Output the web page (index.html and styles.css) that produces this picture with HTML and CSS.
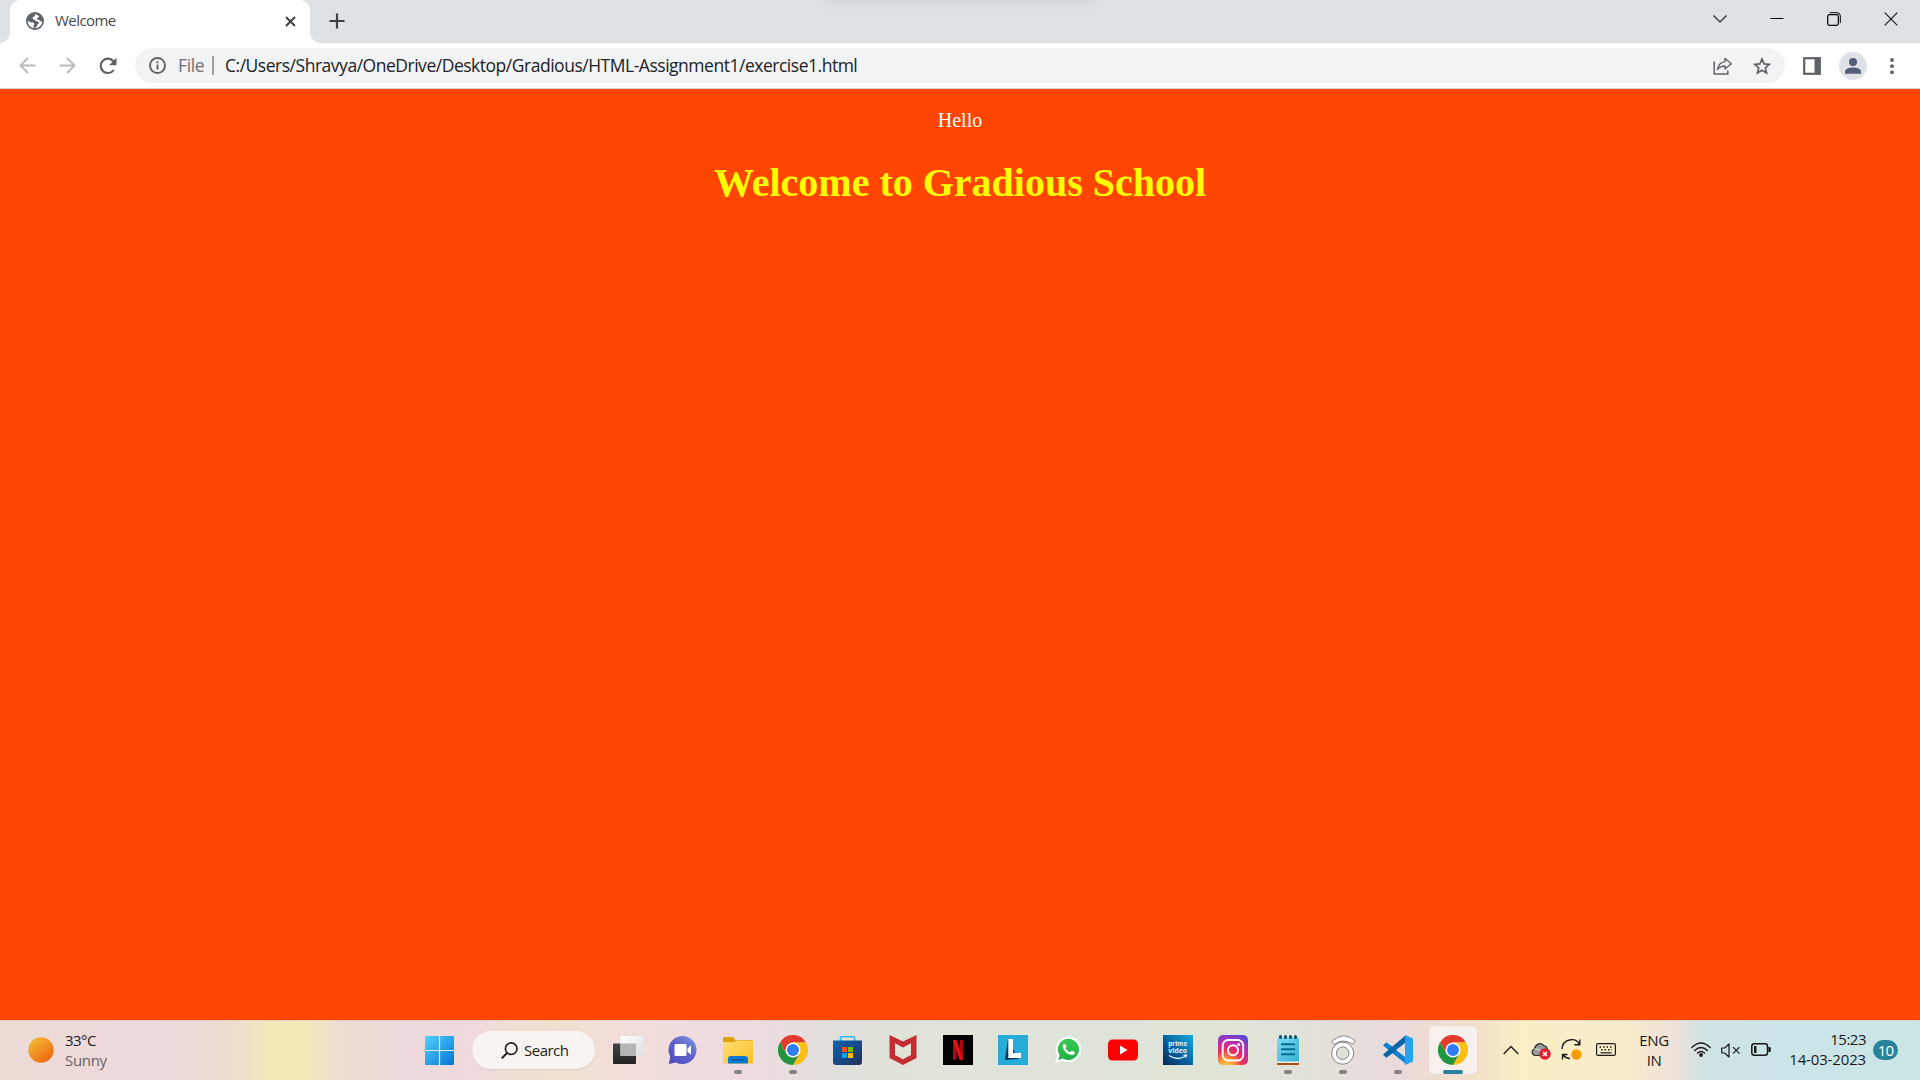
FILE: index.html
```html
<!DOCTYPE html>
<html lang="en">
<head>
<meta charset="utf-8">
<title>Welcome</title>
<link rel="stylesheet" href="styles.css">
</head>
<body>
<svg width="0" height="0" class="defs">
  <defs>
    <linearGradient id="win" x1="0" y1="0" x2="1" y2="1"><stop offset="0" stop-color="#50d3fb"/><stop offset="1" stop-color="#0673d6"/></linearGradient>
    <linearGradient id="sun" x1="0" y1="0" x2=".8" y2="1"><stop offset="0" stop-color="#f2c43a"/><stop offset="1" stop-color="#ef6410"/></linearGradient>
    <linearGradient id="dark" x1="0" y1="0" x2="0" y2="1"><stop offset="0" stop-color="#444"/><stop offset="1" stop-color="#222"/></linearGradient>
    <linearGradient id="lite" x1="0" y1="0" x2="1" y2="1"><stop offset="0" stop-color="#fff"/><stop offset="1" stop-color="#dedede"/></linearGradient>
    <linearGradient id="chat" x1="1" y1="0" x2="0.2" y2="1"><stop offset="0" stop-color="#7f9be8"/><stop offset=".5" stop-color="#6264c8"/><stop offset="1" stop-color="#4f4fc4"/></linearGradient>
    <linearGradient id="fold" x1="0" y1="0" x2="1" y2="1"><stop offset="0" stop-color="#ffdf78"/><stop offset="1" stop-color="#fbbf22"/></linearGradient>
    <linearGradient id="store" x1="0" y1="0" x2="1" y2="1"><stop offset="0" stop-color="#0a64b4"/><stop offset="1" stop-color="#263057"/></linearGradient>
    <linearGradient id="prime" x1="1" y1="0" x2="0" y2="1"><stop offset="0" stop-color="#16a8dd"/><stop offset=".6" stop-color="#075a97"/><stop offset="1" stop-color="#06264f"/></linearGradient>
    <radialGradient id="insta" cx=".28" cy="1.05" r="1.15"><stop offset="0" stop-color="#ffd055"/><stop offset=".22" stop-color="#fb9a35"/><stop offset=".48" stop-color="#ea2c5c"/><stop offset=".72" stop-color="#b82fae"/><stop offset="1" stop-color="#5a48d8"/></radialGradient>
    <linearGradient id="note" x1="0" y1="0" x2="1" y2="1"><stop offset="0" stop-color="#7fdcf0"/><stop offset="1" stop-color="#35b0d4"/></linearGradient>
    <linearGradient id="wa" x1="0" y1="0" x2="0" y2="1"><stop offset="0" stop-color="#35cb55"/><stop offset="1" stop-color="#1fb141"/></linearGradient>
    <symbol id="chrome" viewBox="0 0 30 30">
      <path d="M2 7.5A15 15 0 0 1 28 7.5H15L8.5 18.7z" fill="#e23c2e"/>
      <path d="M28 7.5A15 15 0 0 1 15 30L21.5 18.7 21.5 11.2 15 7.5z" fill="#fcc011"/>
      <path d="M2 7.5A15 15 0 0 0 15 30L21.5 18.7H8.5z" fill="#22963f"/>
      <circle cx="15" cy="15" r="7.5" fill="#fff"/><circle cx="15" cy="15" r="6" fill="#2f7df1"/>
    </symbol>
  </defs>
</svg>

<header class="tabstrip">
  <div class="tab">
    <svg class="globe" width="18" height="18" viewBox="0 0 18 18"><circle cx="9" cy="9" r="9" fill="#5f6368"/><path d="M9.800 1.900C8.600 2.500 9.300 3.700 8.300 4.400 7 4.700 6.400 5.600 6.600 6.700 7.500 8.300 9.600 7.300 10.200 8.900 10.700 9.900 12.500 9.200 13 10.300 13.200 11.600 11.800 11.900 11.300 13 10.900 14.300 9.700 15.200 9 16.200 12.900 16.200 16.200 13 16.200 9.200 15 9.800 13.600 9.200 13.200 8 12 8 10.800 7.800 11 6.600 11.400 5.600 13.300 5.600 13 4.200 12.600 3.200 11 3.200 9.800 1.900z" fill="#fff"/><path d="M1.800 8.700C1.600 12.500 4.400 15.500 7.600 16 8.300 14.900 7.300 14 7.700 12.900 8.600 12.200 8.400 10.800 7.200 10.400 5.500 10.400 3.900 10.200 1.800 8.700z" fill="#fff"/></svg>
    <span class="tab-title">Welcome</span>
    <svg class="tab-close" width="11" height="11" viewBox="0 0 11 11"><path d="M1 1l9 9M10 1l-9 9" stroke="#3c4043" stroke-width="2"/></svg>
  </div>
  <svg class="new-tab" width="16" height="16" viewBox="0 0 16 16"><path d="M8 .5v15M.5 8h15" stroke="#3c4043" stroke-width="2.200"/></svg>
  <div class="snap-shadow"></div>
  <div class="window-controls">
    <svg width="14" height="14" viewBox="0 0 14 14"><path d="M.5 3.500L7 10l6.500-6.500" fill="none" stroke="#222" stroke-width="1.100"/></svg>
    <svg width="14" height="14" viewBox="0 0 14 14"><path d="M.5 6.500h13" stroke="#000"/></svg>
    <svg width="14" height="14" viewBox="0 0 14 14"><rect x=".7" y="2.700" width="10.600" height="10.600" rx="1.800" fill="none" stroke="#000" stroke-width="1.200"/><path d="M2.800.7H10q3.300 0 3.300 3.300v7" fill="none" stroke="#000"/></svg>
    <svg width="14" height="14" viewBox="0 0 14 14"><path d="M.7.7l12.600 12.600M13.300.7L.7 13.300" stroke="#111" stroke-width="1.100"/></svg>
  </div>
</header>

<nav class="toolbar">
  <svg class="nav-icon" width="18" height="18" viewBox="0 0 18 18"><path d="M16.500 8.500H1.500M9 1L1.500 8.500 9 16" fill="none" stroke="#bababa" stroke-width="1.800"/></svg>
  <svg class="nav-icon" width="18" height="18" viewBox="0 0 18 18"><path d="M.5 8.500h15M8 1l7.500 7.500L8 16" fill="none" stroke="#bababa" stroke-width="1.800"/></svg>
  <svg class="nav-icon" width="18" height="18" viewBox="0 0 18 18"><path d="M14.800 13A7.200 7.200 0 1 1 14.500 4.300" fill="none" stroke="#5f6368" stroke-width="2.100"/><path d="M17.500.8v7.400h-7.400z" fill="#5f6368"/></svg>
  <div class="omnibox">
    <svg width="17" height="17" viewBox="0 0 17 17"><circle cx="8.500" cy="8.500" r="7.500" fill="none" stroke="#5f6368" stroke-width="1.900"/><path d="M8.500 7.500v5M8.500 4.300v1.900" stroke="#5f6368" stroke-width="1.900"/></svg>
    <span class="scheme">File</span>
    <span class="divider"></span>
    <span class="url">C:/Users/Shravya/OneDrive/Desktop/Gradious/HTML-Assignment1/exercise1.html</span>
    <svg class="share" width="20" height="18" viewBox="0 0 20 18"><path d="M1.200 4.500v12.600h13.600v-3.600" fill="none" stroke="#5f6368" stroke-width="1.500"/><path d="M12 1.500l6.300 5.300-6.300 5.200V9C8.500 9 6.500 10 4.500 12.500 5.200 8 7.500 5.200 12 4.600z" fill="none" stroke="#5f6368" stroke-width="1.400" stroke-linejoin="round"/></svg>
    <svg class="star" width="18" height="18" viewBox="0 0 18 18"><path d="M9 2l2.100 4.900 5.200.45-4 3.450 1.250 5.200L9 13.200 4.450 16l1.250-5.200-4-3.450 5.200-.45z" fill="none" stroke="#5f6368" stroke-width="1.700"/></svg>
  </div>
  <svg class="panel" width="18" height="18" viewBox="0 0 18 18"><rect x="1.200" y="1.200" width="15.600" height="15.600" fill="#fff" stroke="#5f6368" stroke-width="2.200"/><path d="M11.500 1H17v16h-5.500z" fill="#5f6368"/></svg>
  <svg class="avatar" width="28" height="28" viewBox="0 0 28 28"><circle cx="14" cy="14" r="14" fill="#dee1e6"/><circle cx="14" cy="10" r="4" fill="#525f76"/><path d="M6 21.800v-2c0-3.200 4.500-4.300 8-4.300s8 1.100 8 4.300v2z" fill="#525f76"/></svg>
  <svg class="menu" width="6" height="18" viewBox="0 0 6 18"><circle cx="3" cy="3" r="1.900" fill="#5f6368"/><circle cx="3" cy="9.200" r="1.900" fill="#5f6368"/><circle cx="3" cy="15.300" r="1.900" fill="#5f6368"/></svg>
</nav>

<main class="page">
  <p>Hello</p>
  <h1>Welcome to Gradious School</h1>
</main>

<footer class="taskbar">
  <div class="weather">
    <svg width="26" height="26" viewBox="0 0 26 26"><circle cx="13" cy="13" r="12.700" fill="url(#sun)"/></svg>
    <div class="lines"><span class="temp">33°C</span><span class="cond">Sunny</span></div>
  </div>
  <svg class="start" width="29" height="29" viewBox="0 0 29 29"><rect width="29" height="29" rx="1" fill="url(#win)"/><path d="M14.500 0v29M0 14.500h29" stroke="#e3edf4" stroke-width="1.200"/></svg>
  <div class="search">
    <svg width="17" height="17" viewBox="0 0 17 17"><circle cx="10.200" cy="6.700" r="5.800" fill="none" stroke="#1b1b1b" stroke-width="1.600"/><path d="M6 11L.8 16.300" stroke="#1b1b1b" stroke-width="1.900"/></svg>
    <span>Search</span>
  </div>
  <div class="apps">
    <div class="app"><svg viewBox="0 0 30 30"><rect y="8.500" width="23" height="20.500" rx="1" fill="url(#dark)"/><rect x="7.500" y="1" width="22.500" height="20" rx="1" fill="url(#lite)"/><path d="M7.500 8.500H23V21H7.500z" fill="#b5b5b5"/></svg></div>
    <div class="app"><svg viewBox="0 0 30 30"><path d="M14.500 1a14 14 0 1 1-6.500 26.400L.9 29l1.300-7.300A14 14 0 0 1 14.500 1z" fill="url(#chat)"/><rect x="6.500" y="9" width="12" height="12" rx="1.500" fill="#fff"/><path d="M19.500 13.500l3.500-3.200v9.500L19.500 16.800z" fill="#fff"/></svg></div>
    <div class="app run"><svg viewBox="0 0 30 30"><path d="M0 3q0-1 1-1h9l2.500 3H29q1 0 1 1v10H0z" fill="#dda009"/><path d="M0 7h11l2-1.500H30V27.500q0 1-1 1H1q-1 0-1-1z" fill="url(#fold)"/><path d="M5 28.500V24q0-3 3-3h14q3 0 3 3v4.500z" fill="#0d78d0"/><path d="M8.500 24.800h13" stroke="#064f96"/></svg></div>
    <div class="app run"><svg><use href="#chrome"/></svg></div>
    <div class="app"><svg viewBox="0 0 30 30"><path d="M7.500 7V3q0-1.200 1.200-1.200h11.600q1.200 0 1.200 1.200v4" fill="none" stroke="#28bdef" stroke-width="1.600"/><path d="M0 5.500h29V27q0 3-3 3H3q-3 0-3-3z" fill="url(#store)"/><path d="M9 12h5v5H9z" fill="#f25022"/><path d="M15 12h5v5h-5z" fill="#7fba00"/><path d="M9 18h5v5H9z" fill="#00a4ef"/><path d="M15 18h5v5h-5z" fill="#ffb900"/></svg></div>
    <div class="app"><svg viewBox="0 0 30 30"><path d="M1.500 0L15 6.500 28.500 0V23L15 30 1.500 23zM7 8.300V20l8 4.300L23 20V8.300L15 12.500z" fill="#c12d31" fill-rule="evenodd"/></svg></div>
    <div class="app"><svg viewBox="0 0 30 30"><path d="M0 0h30v30H0z"/><path d="M10 5h3.500v19.500L10 25zM17 5h3v20l-3-.5z" fill="#b00810"/><path d="M10 5h3.500L20 25l-3.500-.5z" fill="#e91019"/></svg></div>
    <div class="app"><svg viewBox="0 0 30 30"><path d="M0 0h30v30H0z" fill="#27abd8"/><path d="M10 4L7 25l14-1-4-6z" fill="#0c3568"/><path d="M10.300 4h4.700v14h8v5H10.300z" fill="#fff"/></svg></div>
    <div class="app"><svg viewBox="0 0 30 30"><path d="M15.500 1.500a12.800 12.800 0 1 1-6.300 24L2 28l2.500-7A12.900 12.900 0 0 1 15.500 1.500z" fill="#fff"/><path d="M15.500 3.800a10.600 10.600 0 1 1-5.700 19.600L5.200 25l1.500-4.600A10.600 10.600 0 0 1 15.500 3.800z" fill="url(#wa)"/><path d="M11.700 8.700c-1.500.2-2.300 1.400-1.900 3.200.8 3.900 5.200 8 9.300 8 1.700 0 3-1.200 2.800-2.700l-3-1.600-1.700 1.700c-2-.8-3.800-2.500-4.600-4.400l1.200-1.500z" fill="#fff"/></svg></div>
    <div class="app"><svg viewBox="0 0 30 30"><rect y="4.500" width="30" height="21" rx="4.500" fill="#f00"/><path d="M12 10.500l7.500 4.500-7.500 4.500z" fill="#fff"/></svg></div>
    <div class="app"><svg viewBox="0 0 30 30"><path d="M0 0h30v30H0z" fill="url(#prime)"/><text class="prime" x="14.700" y="10.500" textLength="19" lengthAdjust="spacingAndGlyphs">prime</text><text class="prime" x="14.700" y="18" textLength="19" lengthAdjust="spacingAndGlyphs">video</text><path d="M6 20.500q8 5.500 16 1M20.500 20.300l3-.3-.8 2.600" fill="none" stroke="#e0f4fb" stroke-width="1.300"/></svg></div>
    <div class="app"><svg viewBox="0 0 30 30"><rect width="30" height="30" rx="5" fill="url(#insta)"/><rect x="4.700" y="5" width="20.500" height="20.500" rx="5.500" fill="none" stroke="#fff" stroke-width="1.900"/><circle cx="15" cy="15.200" r="5" fill="none" stroke="#fff" stroke-width="1.900"/><circle cx="20.700" cy="9.500" r="1.500" fill="#fff"/></svg></div>
    <div class="app run"><svg viewBox="0 0 30 30"><path d="M4 28h22v1.200q0 .8-.8.800H4.800q-.8 0-.8-.8z" fill="#a5510b"/><path d="M4 26h22v2H4z" fill="#eee"/><path d="M4 4q0-1.500 1.500-1.500h19Q26 2.500 26 4v22.500H4z" fill="url(#note)"/><path d="M8 9.300h14M8 14.300h14M8 19.200h14" stroke="#086b91" stroke-width="1.900"/><path d="M7.500 1.500v1M12.500 1.500v1M17.500 1.500v1M22.500 1.500v1" stroke="#095775" stroke-width="3" stroke-linecap="round"/></svg></div>
    <div class="app run"><svg viewBox="0 0 30 30"><g fill="#fff" stroke="#777" stroke-width=".9"><path d="M5.500 5.200Q15-3.500 26.500 5l.2 1.800-2 2.200Q15 2.800 6.300 9.300L3.600 6.800z"/><circle cx="14.700" cy="18.200" r="11"/><circle cx="14.700" cy="18.200" r="6.300" fill="#dfe1d8"/></g></svg></div>
    <div class="app run"><svg viewBox="0 0 30 30"><path d="M0 10.500l2.700-2.700q.6-.6 1.400 0L23 21.500V29z" fill="#0a82cf"/><path d="M0 19.500l2.700 2.700q.6.600 1.400 0L23 8.500V0z" fill="#0b65a8"/><path d="M22 0l8 3.500v23L22 30z" fill="#24a3ef"/><path d="M22 8v14l-9-7z" fill="#e5dadb"/></svg></div>
    <div class="app run active"><svg><use href="#chrome"/></svg></div>
  </div>
  <div class="tray">
    <svg class="chevron" width="16" height="10" viewBox="0 0 16 10"><path d="M.7 9L8 1.500 15.300 9" fill="none" stroke="#1b1b1b" stroke-width="1.300"/></svg>
    <svg class="cloud" width="20" height="18" viewBox="0 0 20 18"><path d="M4.500 13.500C1 13.500-.5 9 3.500 6.800 4.500 2 10.500-.5 13 3.800c3 .3 3.500 2.500 3.500 4.500L13 13.500z" fill="#999b9e" stroke="#292929" stroke-width="1.200"/><path d="M3.500 7q3.500-1 6.500 2.500l6-2" fill="none" stroke="#d5d1c5" stroke-width="1.200"/><circle cx="14" cy="12" r="5.800" fill="#e0202e"/><path d="M12 10l4 4m0-4l-4 4" stroke="#fff" stroke-width="1.500"/></svg>
    <svg class="sync" width="21" height="21" viewBox="0 0 21 21"><path d="M1 10C1.500 0 14.500-2.500 18.500 5.500M18.800.5v5.300h-5.500M6.500 15.500H1.500V20.500M2 16q3 3.500 7 3.500" fill="none" stroke="#1b1b1b" stroke-width="1.400"/><circle cx="15.500" cy="15.500" r="5.200" fill="#fb9b08"/></svg>
    <svg class="keyboard" width="20" height="13" viewBox="0 0 20 13"><rect x=".6" y=".6" width="18.800" height="11.800" rx="1.500" fill="none" stroke="#1b1b1b" stroke-width="1.200"/><path d="M3.500 4h13M5 6.800h11" stroke="#1b1b1b" stroke-width="1.500" stroke-dasharray="1.500 2"/><path d="M4.500 9.800h11" stroke="#1b1b1b" stroke-width="1.200"/></svg>
    <div class="lang"><span>ENG</span><span>IN</span></div>
    <svg class="wifi" width="20" height="15" viewBox="0 0 20 15"><g fill="none" stroke="#1b1b1b" stroke-width="1.400" stroke-linecap="round"><path d="M.8 5.500Q10-3.500 19.200 5.500M3.700 8.400q6.300-6 12.600 0M6.500 11q3.500-3 7 0"/></g><circle cx="10" cy="13" r="1.900" fill="#1b1b1b"/></svg>
    <svg class="volume" width="20" height="15" viewBox="0 0 20 15"><path d="M.7 5h3L8 1v13l-4.300-4h-3z" fill="none" stroke="#1b1b1b" stroke-width="1.200" stroke-linejoin="round"/><path d="M12 4.200l6.500 6.500m0-6.500L12 10.700" stroke="#1b1b1b" stroke-width="1.200"/></svg>
    <svg class="battery" width="21" height="13" viewBox="0 0 21 13"><rect x=".8" y=".8" width="15.700" height="11.400" rx="2.500" fill="none" stroke="#1b1b1b" stroke-width="1.500"/><path d="M3 3h2.500v7H3zM17.300 4h1.500q1 0 1 1v3q0 1-1 1h-1.500z" fill="#1b1b1b"/></svg>
    <div class="clock"><span>15:23</span><span class="date">14-03-2023</span></div>
    <span class="badge">10</span>
  </div>
</footer>
</body>
</html>
```
FILE: styles.css
```css
* { box-sizing: border-box; }
body {
  margin: 0;
  width: 1920px;
  height: 1080px;
  overflow: hidden;
  display: grid;
  grid-template-rows: 43px 46px 931px 60px;
  font-family: "Open Sans", "Noto Sans", sans-serif;
}
svg { display: block; flex: none; }
span { white-space: nowrap; }
.defs { position: absolute; }

.tabstrip {
  position: relative;
  display: flex;
  background: #dee1e6;
  padding-left: 10px;
  overflow: hidden;
}
.tab {
  position: relative;
  width: 300px;
  height: 43px;
  display: flex;
  padding: 12px 14px 0 16px;
  background: #fff;
  border-radius: 10px 10px 0 0;
}
.tab::before, .tab::after {
  content: "";
  position: absolute;
  bottom: 0;
  width: 10px;
  height: 10px;
}
.tab::before { left: -10px; background: radial-gradient(circle at 0 0, transparent 9.5px, #fff 10px); }
.tab::after { right: -10px; background: radial-gradient(circle at 100% 0, transparent 9.5px, #fff 10px); }
.tab-title {
  margin: -2px 0 0 11px;
  flex: 1;
  font-size: 15px;
  line-height: 21px;
  letter-spacing: -0.55px;
  color: #45494d;
}
.tab-close { margin-top: 4px; }
.new-tab { margin: 13px 0 0 19px; }
.snap-shadow {
  position: absolute;
  left: 828px;
  top: -8px;
  width: 264px;
  height: 6px;
  box-shadow: 0 0 12px 3px #cdd1d7;
}
.window-controls {
  display: flex;
  gap: 43px;
  margin-left: auto;
  padding: 12px 22px 0 0;
}

.toolbar {
  display: flex;
  align-items: center;
  background: #fff;
  border-bottom: 1px solid #d5d7da;
  padding-left: 19px;
}
.nav-icon { margin-right: 22px; }
.omnibox {
  width: 1650px;
  height: 35px;
  margin-left: -4px;
  padding: 0 14px;
  display: flex;
  align-items: center;
  background: #f1f3f4;
  border-radius: 18px;
  font-size: 17.5px;
  line-height: 24px;
}
.scheme { width: 34px; margin: -1px 0 0 12px; color: #6b6f74; letter-spacing: -0.4px; }
.divider { width: 2px; height: 19px; background: #9da0a4; }
.url { margin: -1px 0 0 11px; color: #202124; letter-spacing: -0.48px; }
.share { margin-left: auto; }
.star { margin-left: 20px; }
.panel { margin-left: 18px; }
.avatar { margin-left: 18px; }
.menu { margin-left: 22px; }

.page {
  background: #ff4500;
  text-align: center;
  font-family: "Liberation Serif", serif;
  padding: 20px 10px 0;
}
.page p { margin: 0; color: #fff; font-size: 20px; line-height: 23px; }
.page h1 { margin: 28px 0 0; color: #ff0; font-size: 40px; line-height: 46px; }

.taskbar {
  display: flex;
  color: #1b1b1b;
  font-size: 15px;
  line-height: 20px;
  border-top: 1px solid #dcd2cf;
  background: linear-gradient(90deg, #ecdcd4 0, #eed9da 110px, #eddad9 190px, #efddce 235px, #f3e9b6 275px, #f3e8b5 300px, #eeddd0 340px, #ecd8dc 405px, #f0dadb 470px, #f0e0cd 555px, #f2ddda 620px, #efdbe0 740px, #e2dfdc 830px, #e0e3d7 920px, #dfe3da 1060px, #dfe5d6 1210px, #e3e1d9 1320px, #e9dadb 1400px, #f3e1c8 1480px, #faefc5 1520px, #f8edcb 1620px, #eee1d8 1675px, #cfe3e4 1705px, #cce5e8 1780px, #cbe4e6 1920px);
}
.weather { width: 424px; padding: 16px 0 0 28px; display: flex; }
.lines { display: grid; grid-auto-rows: 20px; margin: -7px 0 0 11px; height: 40px; }
.temp { letter-spacing: -0.55px; }
.cond { color: #676361; letter-spacing: -0.3px; }
.start { margin: 15px 0 0 1px; }
.search {
  width: 123px;
  height: 38px;
  margin: 10px 0 0 18px;
  padding-left: 29px;
  display: flex;
  align-items: center;
  gap: 6px;
  border-radius: 19px;
  background: #f9f4f1;
  box-shadow: 0 1px 1px #d9cbc8;
  letter-spacing: -0.5px;
}
.apps { display: flex; margin-left: 5px; }
.app { position: relative; width: 55px; height: 59px; padding: 14px 0 0 13px; }
.app svg { position: relative; width: 30px; height: 30px; }
.run::after {
  content: "";
  position: absolute;
  left: 24px;
  top: 49px;
  width: 8px;
  height: 4px;
  border-radius: 2px;
  background: #858180;
}
.active::before {
  content: "";
  position: absolute;
  left: 4px;
  top: 5px;
  width: 48px;
  height: 48px;
  border-radius: 5px;
  background: #f7f0ed;
  box-shadow: 0 0 1px 1px #ead9d5;
}
.active::after { left: 18px; width: 20px; background: #28839a; }
.prime { font: 700 7px "Open Sans", sans-serif; fill: #e0f4fb; text-anchor: middle; }

.tray { display: flex; margin-left: 23px; }
.chevron { margin-top: 24px; }
.cloud { margin: 21px 0 0 12px; }
.sync { margin: 18px 0 0 10px; }
.keyboard { margin: 22px 0 0 14px; }
.lang, .clock { display: grid; grid-auto-rows: 20px; height: 40px; margin-top: 9px; }
.lang { width: 40px; margin-left: 18px; text-align: center; letter-spacing: -0.4px; }
.wifi { margin: 21px 0 0 17px; }
.volume { margin: 22px 0 0 10px; }
.battery { margin: 22px 0 0 10px; }
.clock { width: 84px; margin-left: 10px; text-align: right; letter-spacing: -0.5px; margin-top: 8px; }
.date { letter-spacing: -0.15px; }
.badge {
  width: 25px;
  height: 20px;
  margin: 19px 0 0 7px;
  border-radius: 10px;
  background: #28839a;
  color: #fff;
  font-size: 15px;
  text-align: center;
  letter-spacing: -0.8px;
}
```
